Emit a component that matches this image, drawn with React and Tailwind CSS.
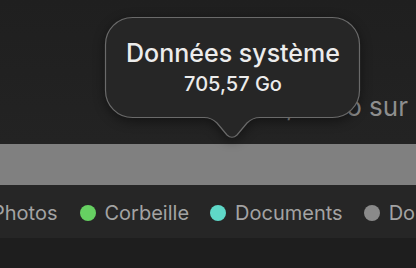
import React from "react";

function Dot({ color }) {
  return <span className={`inline-block w-4 h-4 rounded-full shrink-0 ${color}`} />;
}

export default function App() {
  return (
    <div
      className="relative w-[416px] h-[268px] overflow-hidden bg-[#1e1e1e]"
      style={{ fontFamily: "Inter, 'Noto Sans', sans-serif" }}
    >
      <div className="h-[144px] bg-gradient-to-b from-[#1f1f1f] to-[#232323] flex flex-col justify-end items-end pb-[22px] pr-[8px] overflow-hidden">
        <div className="whitespace-nowrap text-[26px] leading-[30px] text-[#8e8e8e]">
          1 204,31 Go sur
        </div>
      </div>
      <div className="h-[41px] bg-[#808080]" />
      <div className="h-[53px] bg-[#262626] flex items-center overflow-hidden pt-[3px]">
        <div className="flex items-center whitespace-nowrap text-[20px] leading-[24px] text-[#a3a3a3] ml-[-33px]">
          <div className="flex items-center gap-[9px]">
            <Dot color="bg-[#f2c94c]" />
            <span>Photos</span>
          </div>
          <div className="flex items-center gap-[9px] ml-[22px]">
            <Dot color="bg-[#66d062]" />
            <span>Corbeille</span>
          </div>
          <div className="flex items-center gap-[9px] ml-[21px]">
            <Dot color="bg-[#5fd8c8]" />
            <span>Documents</span>
          </div>
          <div className="flex items-center gap-[9px] ml-[21px]">
            <Dot color="bg-[#8a8a8a]" />
            <span>Données système</span>
          </div>
        </div>
      </div>
      <div className="h-[30px] bg-[#1e1e1e]" />

      <div className="absolute left-0 top-0 w-[416px] h-[150px]">
        <svg width="416" height="150" className="absolute left-0 top-0" style={{ filter: "drop-shadow(0 3px 6px rgba(0,0,0,0.45))" }}>
          <path
            d="M 132.5 17.5 H 332.5 A 27 27 0 0 1 359.5 44.5 V 90.5 A 27 27 0 0 1 332.5 117.5 H 260 C 254 117.5 251 119 247 123 L 237 135 C 234 138 230 138 227 135 L 217 123 C 213 119 210 117.5 204 117.5 H 132.5 A 27 27 0 0 1 105.5 90.5 V 44.5 A 27 27 0 0 1 132.5 17.5 Z"
            fill="#262626"
            stroke="#6a6a6a"
            strokeWidth="1.2"
          />
        </svg>
        <div className="absolute left-[106px] top-[18px] w-[254px] h-[100px] flex flex-col items-center pt-[20px] text-[#ececec] font-medium">
          <div className="text-[25px] leading-[30px]">Données système</div>
          <div className="text-[20px] leading-[24px] mt-[4px]">705,57 Go</div>
        </div>
      </div>
    </div>
  );
}
